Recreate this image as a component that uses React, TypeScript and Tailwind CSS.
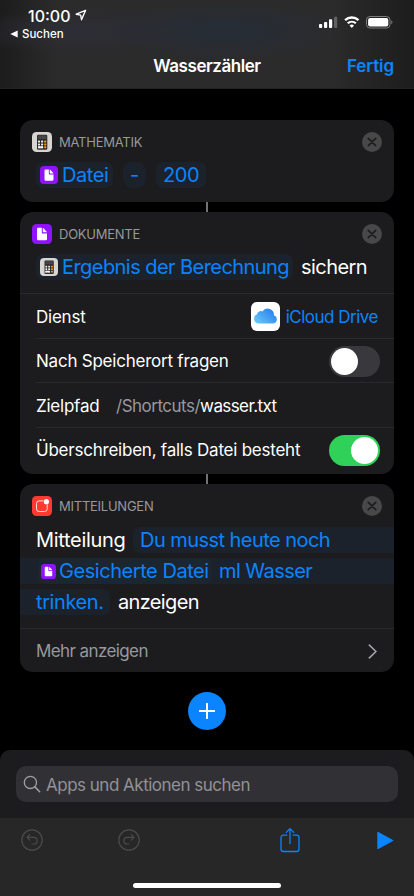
import type { ReactNode } from "react";
import { clsx } from "clsx";

function CalculatorIcon({ className }: { className?: string }) {
  return (
    <svg viewBox="0 0 20 20" className={clsx("shrink-0", className)}>
      <rect width="20" height="20" rx="4.5" fill="#d6d5d1" />
      <rect x="5" y="2.8" width="10.3" height="15" rx="1.2" fill="#2e2d2d" />
      <rect x="5.8" y="3.6" width="8.7" height="3.4" rx="0.5" fill="#474645" />
      {[8.6, 11.4, 14.2].map((y) => (
        <g key={y}>
          <rect x="6" y={y} width="2" height="2" rx="0.6" fill="#f3f2f0" />
          <rect x="9.1" y={y} width="2" height="2" rx="0.6" fill="#f3f2f0" />
          <rect x="12.2" y={y} width="2.1" height="2" rx="0.6" fill="#f79a1c" />
        </g>
      ))}
      <rect x="6" y="14.2" width="5.1" height="2" rx="0.6" fill="#f3f2f0" />
    </svg>
  );
}

function DocumentIcon({ className }: { className?: string }) {
  return (
    <svg viewBox="0 0 20 20" className={clsx("shrink-0", className)}>
      <rect width="20" height="20" rx="4.5" fill="#9013fe" />
      <path d="M6.2 3.8h3.6v4.6c0 .6.4 1 1 1H15v5.7c0 .8-.4 1.2-1.2 1.2H6.2c-.8 0-1.2-.4-1.2-1.2V5c0-.8.4-1.2 1.2-1.2z" fill="#fff" />
      <path d="M10.8 3.9c.3.1.5.2.7.4l3 3.1c.2.2.3.5.4.9h-3.6c-.3 0-.5-.2-.5-.5z" fill="#fff" />
    </svg>
  );
}

function NotificationIcon({ className }: { className?: string }) {
  return (
    <svg viewBox="0 0 20 20" className={clsx("shrink-0", className)}>
      <rect width="20" height="20" rx="4.5" fill="#ff3a30" />
      <path
        d="M11.6 4.9H7.1a2.6 2.6 0 0 0-2.6 2.6v5.4a2.6 2.6 0 0 0 2.6 2.6h5.5a2.6 2.6 0 0 0 2.6-2.6V8.4"
        fill="none"
        stroke="#fff"
        strokeWidth="0.8"
      />
      <circle cx="14.4" cy="5.7" r="2.6" fill="#fff" />
    </svg>
  );
}

function ICloudIcon() {
  return (
    <svg viewBox="0 0 29 29" className="h-[29px] w-[29px] shrink-0">
      <defs>
        <linearGradient id="cloud" x1="0" y1="1" x2="1" y2="0.2">
          <stop offset="0" stopColor="#6fd0fb" />
          <stop offset="0.5" stopColor="#48a4f4" />
          <stop offset="1" stopColor="#2b7bee" />
        </linearGradient>
      </defs>
      <rect width="29" height="29" rx="6" fill="#fff" />
      <path
        d="M7.6 21.4a4.7 4.7 0 0 1-1.5-9.1 3.9 3.9 0 0 1 5.3-2.9 6.3 6.3 0 0 1 11.5 4.2 4 4 0 0 1-.5 7.8z"
        fill="url(#cloud)"
      />
    </svg>
  );
}

function CloseButton() {
  return (
    <button type="button" className="ml-auto h-5 w-5">
      <svg viewBox="0 0 20 20" className="h-5 w-5">
        <circle cx="10" cy="10" r="10" fill="#484849" />
        <path d="M6.3 6.3l7.4 7.4M13.7 6.3l-7.4 7.4" stroke="#1c1c1e" strokeWidth="1.7" strokeLinecap="round" />
      </svg>
    </button>
  );
}

function CardHeader({ icon, title }: { icon: ReactNode; title: string }) {
  return (
    <div className="flex h-11 items-center pr-3 pl-3">
      {icon}
      <span className="ml-[7px] pt-px text-[13px] tracking-[-0.25px] text-[#98989c]">{title}</span>
      <CloseButton />
    </div>
  );
}

function Toggle({ on }: { on: boolean }) {
  return (
    <div
      className={clsx(
        "flex h-[31px] w-[51px] items-center rounded-full px-0.5",
        on ? "justify-end bg-[#30d158]" : "justify-start bg-[#39393d]"
      )}
    >
      <div className="h-[27px] w-[27px] rounded-full bg-white" />
    </div>
  );
}

function Row({ children, last }: { children: ReactNode; last?: boolean }) {
  return (
    <div
      className={clsx(
        "ml-4 flex items-center pr-3.5 text-[17px] tracking-[-0.6px]",
        last ? "h-[45px]" : "h-[44.5px] border-b border-[#29292b] pt-0.5"
      )}
    >
      {children}
    </div>
  );
}

function RowLabel({ children }: { children: ReactNode }) {
  return <span className="mr-auto pt-px tracking-[-0.23px]">{children}</span>;
}

function Connector({ className }: { className?: string }) {
  return <div className={clsx("mx-auto w-0.5 shrink-0 bg-[#717176]", className)} />;
}

function StatusBar() {
  return (
    <div className="flex h-[27px] pl-7">
      <span className="mt-[6px] w-[44px] text-[16px] leading-5 font-medium">10:00</span>
      <svg viewBox="0 0 12 12" className="mt-[9px] ml-[3px] h-3 w-3">
        <path d="M10.6 1.3L1.2 5.2l4.5.9.8 4.6z" fill="none" stroke="#fff" strokeWidth="1.4" strokeLinejoin="round" />
      </svg>
      <svg viewBox="0 0 76 14" className="mt-[15px] ml-auto mr-[19px] h-[14px] w-[76px]">
        <rect x="0" y="9" width="3.2" height="4" rx="0.9" fill="#fff" />
        <rect x="5" y="7" width="3.2" height="6" rx="0.9" fill="#fff" />
        <rect x="10" y="4.2" width="3.2" height="8.8" rx="0.9" fill="#fff" />
        <rect x="15" y="1.8" width="3.2" height="11.2" rx="0.9" fill="#606163" />
        <path d="M26.1 5.2a9.7 9.7 0 0 1 13.4 0" fill="none" stroke="#fff" strokeWidth="2.3" />
        <path d="M28.7 8.3a6 6 0 0 1 8.2 0" fill="none" stroke="#fff" strokeWidth="2.1" />
        <path d="M30.6 10.6a3.2 3.2 0 0 1 4.4 0L32.8 13z" fill="#fff" />
        <rect x="47.5" y="1.5" width="23.5" height="11.5" rx="3.4" fill="none" stroke="#7d7d7f" />
        <rect x="49.1" y="3" width="20.2" height="8.5" rx="2" fill="#fff" />
        <path d="M72.3 5.2c1.5.6 1.5 3.4 0 4z" fill="#7d7d7f" />
      </svg>
    </div>
  );
}

function Header() {
  return (
    <header className="h-[89px] border-b border-[#242425] bg-[#2a2a2b] bg-[radial-gradient(ellipse_at_54%_35%,#252d37_0%,transparent_36%),radial-gradient(ellipse_at_20%_35%,#2d2d36_0%,transparent_28%),linear-gradient(90deg,#1c1c1c_0%,#2b2b2c_14%,#2b2b2c_80%,#1d1d1d_100%)]">
      <StatusBar />
      <div className="flex h-[14px] items-center pl-[10px]">
        <svg viewBox="0 0 8 8" className="h-2 w-2">
          <path d="M.3 4L7.7.5v7z" fill="#fff" />
        </svg>
        <span className="ml-1 text-[11.5px] leading-[14px] font-medium">Suchen</span>
      </div>
      <div className="grid h-[51px] grid-cols-[1fr_auto_1fr] items-center px-5 text-[17px] font-semibold">
        <span className="col-start-2 tracking-[-0.45px]">Wasserzähler</span>
        <span className="text-right tracking-[-0.1px] text-[#0a84ff]">Fertig</span>
      </div>
    </header>
  );
}

export default function App() {
  return (
    <div className="flex h-[896px] w-[414px] flex-col overflow-hidden bg-black font-['Inter','Liberation_Sans',sans-serif] text-white">
      <Header />

      <main className="flex h-[661px] flex-col px-5 pt-[31px]">
        <section className="h-[81.5px] shrink-0 rounded-[13px] bg-[#1c1c1e]">
          <CardHeader icon={<CalculatorIcon className="h-5 w-5" />} title="MATHEMATIK" />
          <div className="-mt-0.5 flex pl-4 text-[20px] leading-[26px] tracking-[-0.4px] text-[#0a84ff]">
            <span className="flex w-[77px] items-center rounded-[7px] bg-[#1b222b] pl-1">
              <DocumentIcon className="mr-1 h-[18px] w-[18px]" />
              Datei
            </span>
            <span className="ml-2.5 w-[23px] rounded-[9px] bg-[#1b222b] text-center">-</span>
            <span className="ml-2.5 w-[50px] rounded-[7px] bg-[#1b222b] text-center">200</span>
          </div>
        </section>

        <Connector className="h-[10.5px]" />

        <section className="h-[262px] shrink-0 rounded-[13px] bg-[#1c1c1e]">
          <CardHeader icon={<DocumentIcon className="h-5 w-5" />} title="DOKUMENTE" />
          <div className="flex h-[38px] items-start border-b border-[#29292b] pl-4 text-[20px] leading-[26px] tracking-[-0.56px]">
            <span className="-mt-0.5 flex w-[257px] items-center rounded-[7px] bg-[#1b222b] pl-1 whitespace-nowrap text-[#0a84ff]">
              <CalculatorIcon className="mr-1 h-[18px] w-[18px]" />
              Ergebnis der Berechnung
            </span>
            <span className="-mt-0.5 ml-2">sichern</span>
          </div>
          <Row>
            <RowLabel>Dienst</RowLabel>
            <div className="flex items-center gap-1.5 pr-0.5 text-[#0a84ff]">
              <ICloudIcon />
              <span className="pt-px tracking-[-0.5px]">iCloud Drive</span>
            </div>
          </Row>
          <Row>
            <RowLabel>Nach Speicherort fragen</RowLabel>
            <Toggle on={false} />
          </Row>
          <Row>
            <div className="flex w-20">
              <RowLabel>Zielpfad</RowLabel>
            </div>
            <span className="pt-px tracking-[-0.5px] text-[#98989f]">/Shortcuts/</span>
            <span className="pt-px tracking-[-0.6px]">wasser.txt</span>
          </Row>
          <Row last>
            <RowLabel>Überschreiben, falls Datei besteht</RowLabel>
            <Toggle on />
          </Row>
        </section>

        <Connector className="h-2.5" />

        <section className="h-[188px] shrink-0 rounded-[13px] bg-[#1c1c1e]">
          <CardHeader icon={<NotificationIcon className="h-5 w-5" />} title="MITTEILUNGEN" />
          <div className="-mt-px flex flex-col gap-[5px] text-[20px] leading-[26px] tracking-[-0.55px] whitespace-nowrap">
            <div className="flex pl-4">
              <span className="w-[97px] tracking-[-0.3px]">Mitteilung</span>
              <span className="flex-1 rounded-l-[7px] bg-[#1b222b] pl-[7px] text-[#0a84ff]">Du musst heute noch</span>
            </div>
            <div className="flex bg-[#1b222b] pl-[18px] text-[#0a84ff]">
              <span className="flex w-[174px] items-center rounded-[7px] bg-[#1b2630] pl-[3px] tracking-[-0.45px]">
                <DocumentIcon className="mr-[3px] h-[15px] w-[15px]" />
                Gesicherte Datei
              </span>
              <span className="ml-[7px]">ml Wasser</span>
            </div>
            <div className="flex">
              <span className="w-[90px] rounded-r-[7px] bg-[#1b222b] pl-4 tracking-[-0.4px] text-[#0a84ff]">trinken.</span>
              <span className="ml-2 tracking-[-0.65px]">anzeigen</span>
            </div>
          </div>
          <div className="mt-[13px] flex h-11 items-center border-t border-[#29292b] pt-0.5 pr-[17px] pl-4 text-[17px] tracking-[-0.6px] text-[#98989f]">
            <span>Mehr anzeigen</span>
            <svg viewBox="0 0 8 14" className="ml-auto h-[15px] w-[9px]">
              <path d="M.6.6L7.2 7 .6 13.4" fill="none" stroke="#a5a5aa" strokeWidth="1.4" />
            </svg>
          </div>
        </section>

        <button type="button" className="mx-auto mt-5 flex h-[38px] w-[38px] shrink-0 items-center justify-center rounded-full bg-[#0a84ff]">
          <svg viewBox="0 0 16 16" className="h-4 w-4">
            <path d="M8 .8v14.4M.8 8h14.4" stroke="#fff" strokeWidth="2" strokeLinecap="round" />
          </svg>
        </button>
      </main>

      <div className="h-[68px] rounded-t-[10px] bg-[#1c1c1e] px-4 pt-4">
        <div className="flex h-9 items-center rounded-[10px] bg-[#313135] pl-[7px] text-[17px] tracking-[-0.5px] text-[#929298]">
          <svg viewBox="0 0 18 18" className="mr-[5px] h-[18px] w-[18px]">
            <circle cx="7.4" cy="7.4" r="6.1" fill="none" stroke="#a0a0a6" strokeWidth="1.3" />
            <path d="M11.9 11.9l4.8 4.8" stroke="#a0a0a6" strokeWidth="1.5" strokeLinecap="round" />
          </svg>
          <span className="pt-[3px]">Apps und Aktionen suchen</span>
        </div>
      </div>

      <footer className="flex h-[78px] flex-col bg-[#272728]">
        <div className="flex h-11 items-center pl-[21px]">
          <svg viewBox="0 0 22 22" className="h-[22px] w-[22px]" fill="none" stroke="#4b4b4d" strokeWidth="1.2">
            <circle cx="11" cy="11" r="10.2" />
            <path d="M8.8 5.6L6 8.4l2.8 2.8M6 8.4h6.8a3.3 3.3 0 0 1 0 6.6H11" strokeLinecap="round" strokeLinejoin="round" />
          </svg>
          <svg viewBox="0 0 22 22" className="ml-[75px] h-[22px] w-[22px]" fill="none" stroke="#4b4b4d" strokeWidth="1.2">
            <circle cx="11" cy="11" r="10.2" />
            <path d="M13.2 5.6L16 8.4l-2.8 2.8M16 8.4H9.2a3.3 3.3 0 0 0 0 6.6H11" strokeLinecap="round" strokeLinejoin="round" />
          </svg>
          <svg viewBox="0 0 20 26" className="ml-[140px] h-[26px] w-5" fill="none" stroke="#0a84ff" strokeWidth="1.3" strokeLinecap="round" strokeLinejoin="round">
            <path d="M6.8 8.2H3.3A2.3 2.3 0 0 0 1 10.5v11.7a2.3 2.3 0 0 0 2.3 2.3h13.4a2.3 2.3 0 0 0 2.3-2.3V10.5a2.3 2.3 0 0 0-2.3-2.3H13.2" />
            <path d="M10 16.5V1.8M6.2 5.4L10 1.6l3.8 3.8" />
          </svg>
          <svg viewBox="0 0 17 19" className="ml-[77px] h-[19px] w-[17px]">
            <path d="M1 1.6v15.8L15.6 9.5z" fill="#0a84ff" stroke="#0a84ff" strokeWidth="1.4" strokeLinejoin="round" />
          </svg>
        </div>
        <div className="mx-auto mt-[21px] h-[5px] w-[148px] rounded-full bg-white" />
      </footer>
    </div>
  );
}
